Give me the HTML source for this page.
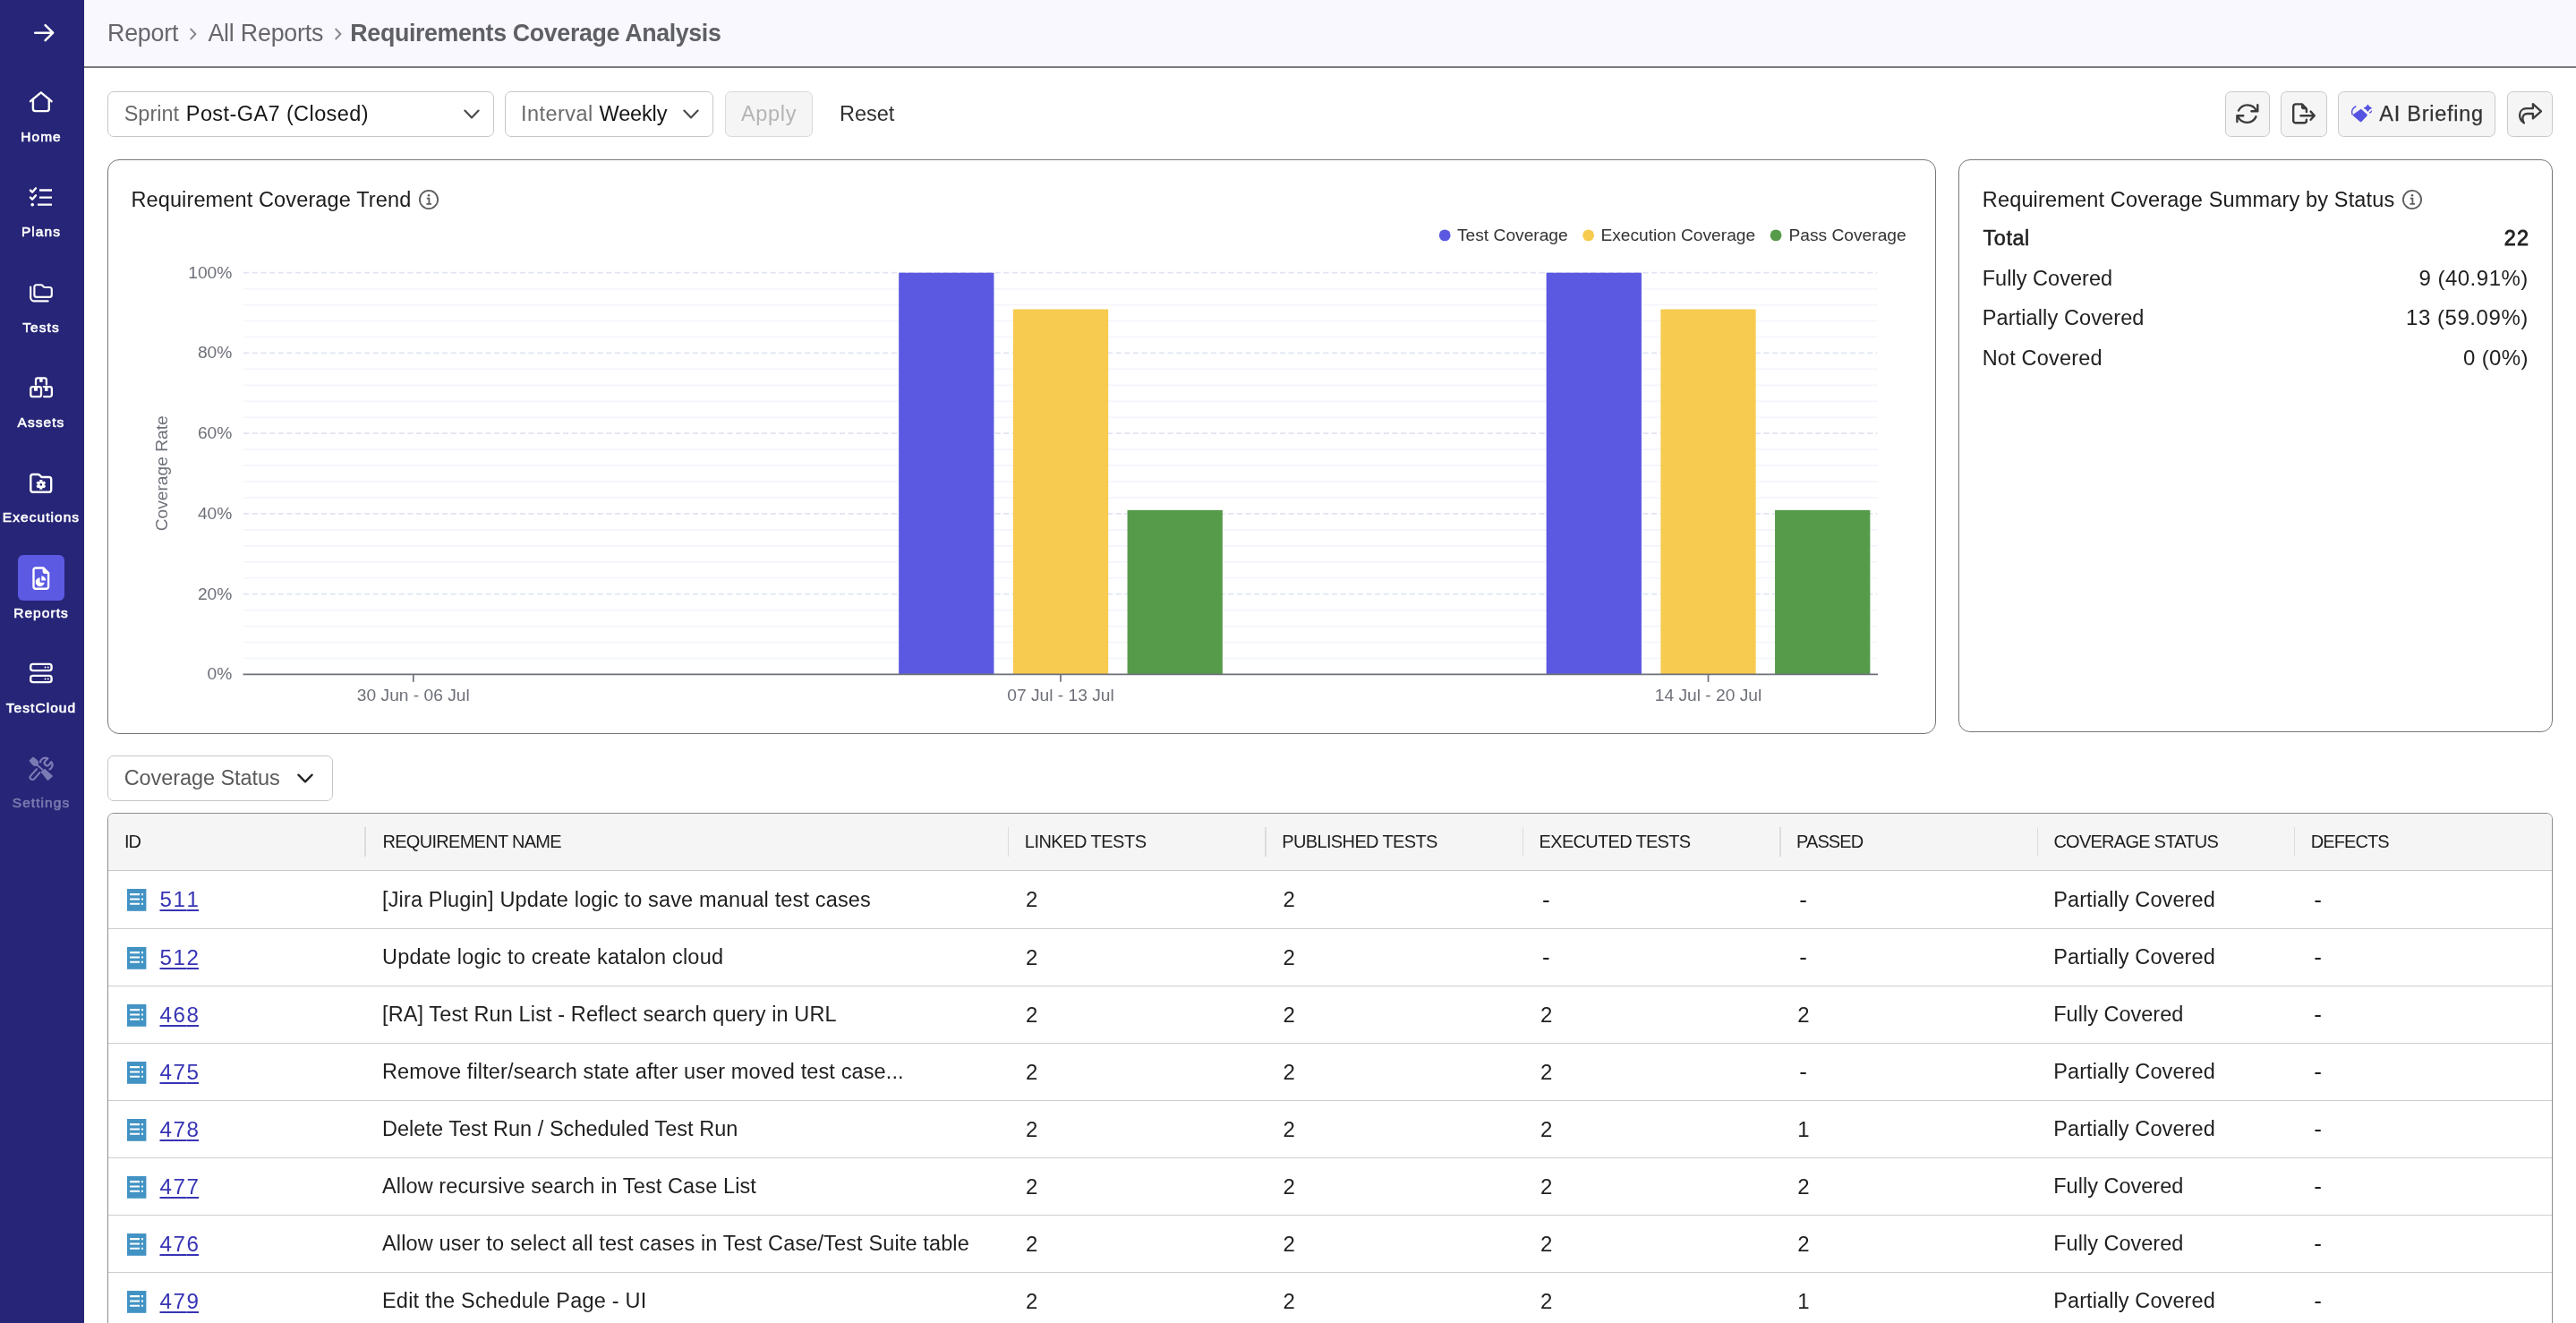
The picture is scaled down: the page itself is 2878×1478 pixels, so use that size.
<!DOCTYPE html>
<html lang="en">
<head>
<meta charset="utf-8">
<title>Requirements Coverage Analysis</title>
<style>
*{box-sizing:border-box;margin:0;padding:0}
html,body{width:2878px;height:1478px;overflow:hidden;background:#fff}
body{font-family:"Liberation Sans",sans-serif;color:#1f1f1f;position:relative;font-size:22.4px}
svg{display:block}
.sidebar,.header,.toolbar,#main{will-change:transform}
/* ---------- sidebar ---------- */
.sidebar{position:absolute;left:0;top:0;width:94px;height:1478px;background:#262577;color:#fff}
.sidebar .toggle{position:absolute;left:0;top:0;width:94px;height:75px}
.nav-item{position:absolute;left:0;width:94px;text-align:center;font-weight:400;font-size:15.5px;letter-spacing:1.05px;color:#fff;-webkit-text-stroke:.6px currentColor}
.nav-item .ico{position:absolute;left:20px;top:0;width:52px;height:51px;border-radius:6px}
.nav-item.active .ico{background:#5c59e3}
.nav-item .lbl{position:absolute;left:-11px;width:114px;text-align:center;top:55.2px;line-height:20px;white-space:nowrap}
.nav-item.disabled{color:#7b7ab0}
/* ---------- header ---------- */
.header{position:absolute;left:94px;top:0;width:2784px;height:76px;background:#f8f8fe;border-bottom:2px solid #7b7b7e}
.crumbs{position:absolute;left:26px;top:0;height:74px;display:flex;align-items:center;font-size:25.6px;color:#66676b;white-space:nowrap}
/* ---------- toolbar ---------- */
.toolbar{position:absolute;left:94px;top:76px;width:2784px;height:102px}
.select{position:absolute;height:51px;top:26px;border:1px solid #c6c6c6;border-radius:7px;background:#fff;white-space:nowrap;line-height:49px;font-size:22.4px;color:#6b6b6b}
.select b{font-weight:400;color:#161616}
.btn{position:absolute;height:51px;top:26px;border:1px solid #c9c9c9;border-radius:6.5px;background:#f5f5f5;white-space:nowrap;line-height:49px;font-size:22.4px;color:#333}

.crumbs span{font-size:26.8px;letter-spacing:-.21px}
.crumbs .c1{letter-spacing:-.2px;margin-right:.2px}
.crumbs .c3{font-weight:700;color:#5f6064;letter-spacing:-.36px;margin-left:-2.8px}
.crumbs .sep{margin:2px 12.6px 0 12.4px}
.select span,.select b,.btn span{position:absolute;top:0;font-size:23.5px}
.select .k{letter-spacing:-.02px}
.btn.dis{color:#b4b4b4;border-color:#d9d9d9}
.reset{position:absolute;left:844px;top:26px;line-height:51px;font-size:23.5px;letter-spacing:-.01px;color:#303030}
/* ---------- cards ---------- */
.card{position:absolute;border:1px solid #77777a;border-radius:13px;background:#fff}
.card h2{position:absolute;font-weight:400;font-size:22.4px;color:#1c1c1c;white-space:nowrap;line-height:28px}

.card h2{font-size:23.5px;line-height:68px;margin-top:3.4px}
.card .info{position:absolute}
.card .chart{position:absolute;left:-1px;top:-1px}
.summary{position:absolute;left:26.5px;top:65px;width:610px;font-size:23.5px}
.summary div{position:relative;height:44.7px;line-height:44.7px}
.summary dt{position:absolute;left:0;top:0;white-space:nowrap}
.summary dd{font-size:24px;position:absolute;right:0;top:0;white-space:nowrap;margin-right:.7px}
.summary div:not(.tot) dt{margin-left:-.8px}
.summary .tot{font-weight:400;-webkit-text-stroke:.55px currentColor}

/* ---------- table ---------- */
.select.cov{position:absolute}
.tablewrap{position:absolute;left:120px;top:908px;width:2732px;height:600px;border:1px solid #8d8d90;border-radius:7px 7px 0 0;overflow:hidden;background:#fff}
table{border-collapse:separate;border-spacing:0;table-layout:fixed;width:2730px;font-size:23.5px}
th{height:64px;background:#f5f5f5;border-bottom:1px solid #c9c9c9;text-align:left;font-weight:400;font-size:20px;color:#1d1d1d;padding:0 0 0 18.3px;position:relative;white-space:nowrap}
th+th:before{content:"";position:absolute;left:-.6px;top:15px;height:33px;width:1.5px;background:#dcdcdc}
th span{position:relative;top:-.5px}
tbody tr:first-child td{height:65px}
td{height:64px;border-bottom:1px solid #cdcdcd;padding:0 0 0 20.5px;white-space:nowrap;color:#1f1f1f;position:relative;letter-spacing:.3px}
th.c0{width:287px;padding-left:18px}th.c1{width:718.5px;padding-left:19.5px}
td.c0{padding-left:0}
td .doc{position:absolute;left:21px;top:20px}
td.n{font-size:24px;padding-left:19.6px}
td.d{font-size:26px;padding-left:21.6px}
td .id i{font-style:normal;letter-spacing:0}
td .id{position:absolute;left:56.5px;top:0;line-height:63px;font-size:24.2px;color:#3734b4;text-decoration:underline;text-decoration-thickness:2px;text-underline-offset:2.6px;letter-spacing:1.6px;padding-left:1px}
td.c1{padding-left:19px}
td .pc{letter-spacing:.1px;margin-left:-2.4px}td .fc{letter-spacing:.01px;margin-left:-2.4px}
</style>
</head>
<body>
<nav class="sidebar" id="sidebar">
<a class="toggle"><svg width="94" height="75" viewBox="0 0 94 75" fill="none" stroke="#fff" stroke-width="2.5" stroke-linecap="round" stroke-linejoin="round"><path d="M39.2 36.7H59M50.6 28.2l8.6 8.5-8.6 8.5"/></svg></a>
<a class="nav-item" style="top:88.0px"><span class="ico"><svg width="51" height="51" viewBox="0 0 51 51" fill="none" stroke="#fff" stroke-width="2.4" stroke-linecap="round" stroke-linejoin="round"><path d="M14 25.2 25.8 15.3 37.6 25.2"/><path d="M16.9 22.8V33.5a2.6 2.6 0 0 0 2.6 2.6H32.2a2.6 2.6 0 0 0 2.6-2.6V22.8"/></svg></span><span class="lbl">Home</span></a>
<a class="nav-item" style="top:194.3px"><span class="ico"><svg width="51" height="51" viewBox="0 0 51 51" fill="none" stroke="#fff" stroke-width="2.4" stroke-linecap="round" stroke-linejoin="round"><path d="M24 18.5H38M24 26.6H38M22 34.6H38" stroke-linecap="butt"/><path d="M14 18.6l2.1 2.1 3.9-4.4M14 26.6l2.1 2.1 3.9-4.4"/><circle cx="16.2" cy="34.7" r="1.4" fill="#fff" stroke-width="1"/></svg></span><span class="lbl">Plans</span></a>
<a class="nav-item" style="top:300.6px"><span class="ico"><svg width="51" height="51" viewBox="0 0 51 51" fill="none" stroke="#fff" stroke-width="2.15" stroke-linecap="round" stroke-linejoin="round"><path d="M20.9 17.2h4.7c.8 0 1.5.3 2 .9l1.2 1.3c.3.4.8.6 1.3.6h5.2c1.4 0 2.5 1.1 2.5 2.5v5.9c0 1.4-1.1 2.5-2.5 2.5H20.9c-1.4 0-2.5-1.1-2.5-2.5V19.7c0-1.4 1.1-2.5 2.5-2.5z"/><path d="M14.2 19.6V31.2c0 2.3 1.9 4.2 4.2 4.2H33.6"/></svg></span><span class="lbl">Tests</span></a>
<a class="nav-item" style="top:406.9px"><span class="ico"><svg width="51" height="51" viewBox="0 0 51 51" fill="none" stroke="#fff" stroke-width="2.3" stroke-linecap="round" stroke-linejoin="round"><path d="M20 22.6V17.4a2.1 2.1 0 0 1 2.1-2.1h7.7a2.1 2.1 0 0 1 2.1 2.1V22.6"/><rect x="14.3" y="25.1" width="11.7" height="11.1" rx="2.3"/><path d="M28.8 25.1h6.8a2.3 2.3 0 0 1 2.3 2.3v6.5a2.3 2.3 0 0 1-2.3 2.3H29.2"/><g fill="#fff" stroke="none"><rect x="24.2" y="15.5" width="3.4" height="4.5" rx=".4"/><rect x="18" y="25.3" width="4" height="4.5" rx=".4"/><rect x="30" y="25.3" width="3.5" height="4.8" rx=".4"/></g></svg></span><span class="lbl">Assets</span></a>
<a class="nav-item" style="top:513.2px"><span class="ico"><svg width="51" height="51" viewBox="0 0 51 51" fill="none" stroke="#fff" stroke-width="2.4" stroke-linecap="round" stroke-linejoin="round"><path d="M16.8 17h5.6c.7 0 1.4.3 1.9.8l1.5 1.6c.4.4.9.6 1.4.6h7.5c1.4 0 2.5 1.1 2.5 2.5v11.8c0 1.4-1.1 2.5-2.5 2.5H16.8c-1.4 0-2.5-1.1-2.5-2.5V19.5c0-1.4 1.1-2.5 2.5-2.5z"/><g stroke="none" fill="#fff"><circle cx="25.8" cy="28.4" r="3.9"/><g stroke="#fff" stroke-width="3.1" stroke-linecap="butt"><path d="M25.8 23.1v10.6M21.2 25.75l9.2 5.3M21.2 31.05l9.2-5.3"/></g></g><circle cx="25.8" cy="28.4" r="1.3" fill="#262577" stroke="none"/></svg></span><span class="lbl">Executions</span></a>
<a class="nav-item active" style="top:619.5px"><span class="ico"><svg width="51" height="51" viewBox="0 0 51 51" fill="none" stroke="#fff" stroke-width="2.4" stroke-linecap="round" stroke-linejoin="round"><path d="M20 14.5h8.6l5.5 5.6V35.2c0 1.4-1.1 2.5-2.5 2.5H20c-1.4 0-2.5-1.1-2.5-2.5V17c0-1.4 1.1-2.5 2.5-2.5z"/><path d="M28.3 15v3.6c0 .9.7 1.6 1.6 1.6h3.7z" fill="#fff" stroke-width="1.4"/><g stroke="none" fill="#fff"><path d="M24.6 25.2a5 5 0 1 0 5.1 5.6h-5.1z"/><path d="M26.3 23.6v5h5A5 5 0 0 0 26.3 23.6z"/></g></svg></span><span class="lbl">Reports</span></a>
<a class="nav-item" style="top:725.8px"><span class="ico"><svg width="51" height="51" viewBox="0 0 51 51" fill="none" stroke="#fff" stroke-width="2.4" stroke-linecap="round" stroke-linejoin="round"><rect x="14.2" y="15.9" width="23.4" height="7.2" rx="2.6"/><rect x="14.2" y="28.9" width="23.4" height="7.2" rx="2.6"/><g stroke="none" fill="#fff"><circle cx="30.6" cy="19.5" r="1"/><circle cx="33.8" cy="19.5" r="1"/><circle cx="30.6" cy="32.5" r="1"/><circle cx="33.8" cy="32.5" r="1"/></g></svg></span><span class="lbl">TestCloud</span></a>
<a class="nav-item disabled" style="top:832.1px"><span class="ico"><svg width="51" height="51" viewBox="0 0 51 51" fill="#7c7ab4" stroke="#7c7ab4" stroke-linejoin="round" stroke-linecap="round"><path stroke-width="1" d="M13.5 17.3 16.2 14.4c.4-.4 1-.4 1.4-.1l4 3.3c.6.5.9 1.2 1 2l.1 1.7-2.1 2.1-1.8 0c-.8 0-1.5-.3-2.1-.9l-3.2-3.8c-.4-.4-.4-1 0-1.4z"/><path fill="none" stroke-width="2" d="M21.3 22.4 27.2 27.6"/><path stroke-width="1.4" d="M26.3 30.3 29.8 27.6 38.3 35 33.5 39.2z"/><path fill="none" stroke-width="2.1" d="M21 27.2 14.3 34.6a2.6 2.6 0 0 0 3.9 3.6L24.5 31"/><path fill="none" stroke-width="2.3" stroke-linecap="butt" d="M24.8 20.3C25 17 27.6 14.7 30.8 14.6c.9 0 1.8.2 2.6.6L30.5 18.3c-1.1 1.2-1 3 .1 4.1 1.2 1.2 3.1 1.2 4.3.1L37.2 19.2c1.2 1.3 1.6 3.2 1.1 4.9-.5 1.8-1.9 3.2-3.6 3.8"/></svg></span><span class="lbl">Settings</span></a>
</nav>
<header class="header" id="header">
<div class="crumbs"><span class="c1">Report</span><svg class="sep" width="8" height="14" viewBox="0 0 8 14" fill="none" stroke="#85868b" stroke-width="2" stroke-linecap="round" stroke-linejoin="round"><path d="M1.3 1.6 6.4 7 1.3 12.4"/></svg><span class="c2">All Reports</span><svg class="sep" width="8" height="14" viewBox="0 0 8 14" fill="none" stroke="#85868b" stroke-width="2" stroke-linecap="round" stroke-linejoin="round"><path d="M1.3 1.6 6.4 7 1.3 12.4"/></svg><span class="c3">Requirements Coverage Analysis</span></div>
</header>
<section class="toolbar" id="toolbar">
<div class="select" style="left:26px;width:432px"><span class="k" style="left:17.7px">Sprint</span><b style="left:86.8px;letter-spacing:.41px">Post-GA7 (Closed)</b><svg style="position:absolute;left:397px;top:19px" width="18" height="12" viewBox="0 0 18 12" fill="none" stroke="#4a4a4a" stroke-width="2.2" stroke-linecap="round" stroke-linejoin="round"><path d="M1.4 1.6 9 9.4 16.6 1.6"/></svg></div>
<div class="select" style="left:470px;width:233px"><span class="k" style="left:17px;letter-spacing:.45px">Interval</span><b style="left:104.6px;letter-spacing:-.16px">Weekly</b><svg style="position:absolute;left:198px;top:19px" width="18" height="12" viewBox="0 0 18 12" fill="none" stroke="#4a4a4a" stroke-width="2.2" stroke-linecap="round" stroke-linejoin="round"><path d="M1.4 1.6 9 9.4 16.6 1.6"/></svg></div>
<div class="btn dis" style="left:716px;width:98px"><span style="left:17px;letter-spacing:.66px">Apply</span></div>
<div class="reset">Reset</div>
<div class="btn" style="left:2392px;width:50px"><svg width="48" height="49" viewBox="0 0 48 49" fill="none" stroke="#3b3b3b" stroke-width="2.4" stroke-linecap="round" stroke-linejoin="round"><path d="M14 20.6A11 11 0 0 1 33.9 20.8"/><path d="M35.3 14.3v7h-6.9"/><path d="M33.5 27.3A11 11 0 0 1 13.6 27.8"/><path d="M12.4 33v-6.7h6.9"/></svg></div>
<div class="btn" style="left:2454px;width:52px"><svg width="50" height="49" viewBox="0 0 50 49" fill="none" stroke="#3b3b3b" stroke-width="2.4" stroke-linecap="round" stroke-linejoin="round"><path d="M27.9 22V18.6L22.9 13.4H15.8a2.6 2.6 0 0 0-2.6 2.6V31.7a2.6 2.6 0 0 0 2.6 2.6h9.5a2.6 2.6 0 0 0 2.6-2.6V30.8"/><path d="M22.6 13.6v3.3a1.7 1.7 0 0 0 1.7 1.7h3.4z" fill="#3b3b3b" stroke-width="1.2"/><path d="M21.4 26.2H36M32.6 21.6l4.2 4.6-4.2 4.6"/></svg></div>
<div class="btn" style="left:2518px;width:176px"><svg style="position:absolute;left:14px;top:13px" width="25" height="22" viewBox="0 0 25 22" fill="#5552e0" stroke="none"><path d="M10 6.3c.45-.45 1.1-.45 1.5 0l6 5.5c.45.45.45 1.1 0 1.6l-6.2 6.6c-.45.45-1.1.45-1.5 0l-7.6-6.6c-.45-.45-.45-1.1 0-1.6z"/><path d="M4.8 3C1.3 4.6-.3 8.4 1.2 12" fill="none" stroke="#5552e0" stroke-width="1.5" stroke-linecap="round"/><path d="M18.4.5Q19.8 3.4 23.3 4.8 19.8 6.2 18.4 9.1 17 6.2 13.5 4.8 17 3.4 18.4.5z"/><path d="M22.7 6.8c.7 1.6-.1 3.2-1.7 3.9l-1.2-1.3c1.4-.3 2.4-1.2 2.9-2.6z"/></svg><span style="left:45.3px;letter-spacing:.74px;-webkit-text-stroke:.25px currentColor">AI Briefing</span></div>
<div class="btn" style="left:2707px;width:51px"><svg width="49" height="49" viewBox="0 0 49 49" fill="none" stroke="#3b3b3b" stroke-width="2.3" stroke-linecap="round" stroke-linejoin="round"><path d="M27.9 13.2 37 21.3 27.9 29.4V24H21.6c-3.2 0-5.4 2.3-5.2 5.6.1 1.7.6 3.3 1.5 4.8C14.7 32.3 13 29 13.1 25.5 13.2 21.2 16.3 18.2 20.6 18.2h7.3z"/></svg></div>
</section>
<main id="main">
<section class="card" style="left:120px;top:178px;width:2043px;height:642px">
<h2 style="left:25.4px;top:6.5px;letter-spacing:.13px">Requirement Coverage Trend</h2><svg class="info" style="left:346px;top:31.6px" width="24" height="24" viewBox="0 0 24 24" fill="none" stroke="#5c5c5c" stroke-width="1.8"><circle cx="12" cy="12" r="10.1"/><path d="M9.8 10.6h2.6v6.2M9.4 16.9h5.6" stroke-width="1.8"/><circle cx="12" cy="7.3" r="1.3" fill="#5c5c5c" stroke="none"/></svg>
<svg class="chart" width="2042" height="640" viewBox="0 0 2042 640">
<line x1="152" x2="1977.5" y1="144.65" y2="144.65" stroke="#f3f5fc" stroke-width="1.6"/>
<line x1="152" x2="1977.5" y1="162.60" y2="162.60" stroke="#f3f5fc" stroke-width="1.6"/>
<line x1="152" x2="1977.5" y1="180.55" y2="180.55" stroke="#f3f5fc" stroke-width="1.6"/>
<line x1="152" x2="1977.5" y1="198.50" y2="198.50" stroke="#f3f5fc" stroke-width="1.6"/>
<line x1="152" x2="1977.5" y1="234.40" y2="234.40" stroke="#f3f5fc" stroke-width="1.6"/>
<line x1="152" x2="1977.5" y1="252.35" y2="252.35" stroke="#f3f5fc" stroke-width="1.6"/>
<line x1="152" x2="1977.5" y1="270.30" y2="270.30" stroke="#f3f5fc" stroke-width="1.6"/>
<line x1="152" x2="1977.5" y1="288.25" y2="288.25" stroke="#f3f5fc" stroke-width="1.6"/>
<line x1="152" x2="1977.5" y1="324.15" y2="324.15" stroke="#f3f5fc" stroke-width="1.6"/>
<line x1="152" x2="1977.5" y1="342.10" y2="342.10" stroke="#f3f5fc" stroke-width="1.6"/>
<line x1="152" x2="1977.5" y1="360.05" y2="360.05" stroke="#f3f5fc" stroke-width="1.6"/>
<line x1="152" x2="1977.5" y1="378.00" y2="378.00" stroke="#f3f5fc" stroke-width="1.6"/>
<line x1="152" x2="1977.5" y1="413.90" y2="413.90" stroke="#f3f5fc" stroke-width="1.6"/>
<line x1="152" x2="1977.5" y1="431.85" y2="431.85" stroke="#f3f5fc" stroke-width="1.6"/>
<line x1="152" x2="1977.5" y1="449.80" y2="449.80" stroke="#f3f5fc" stroke-width="1.6"/>
<line x1="152" x2="1977.5" y1="467.75" y2="467.75" stroke="#f3f5fc" stroke-width="1.6"/>
<line x1="152" x2="1977.5" y1="503.65" y2="503.65" stroke="#f3f5fc" stroke-width="1.6"/>
<line x1="152" x2="1977.5" y1="521.60" y2="521.60" stroke="#f3f5fc" stroke-width="1.6"/>
<line x1="152" x2="1977.5" y1="539.55" y2="539.55" stroke="#f3f5fc" stroke-width="1.6"/>
<line x1="152" x2="1977.5" y1="557.50" y2="557.50" stroke="#f3f5fc" stroke-width="1.6"/>
<line x1="152" x2="1977.5" y1="126.70" y2="126.70" stroke="#e0e5f1" stroke-width="1.8" stroke-dasharray="6.2 3.45"/>
<line x1="152" x2="1977.5" y1="216.45" y2="216.45" stroke="#e0e5f1" stroke-width="1.8" stroke-dasharray="6.2 3.45"/>
<line x1="152" x2="1977.5" y1="306.20" y2="306.20" stroke="#e0e5f1" stroke-width="1.8" stroke-dasharray="6.2 3.45"/>
<line x1="152" x2="1977.5" y1="395.95" y2="395.95" stroke="#e0e5f1" stroke-width="1.8" stroke-dasharray="6.2 3.45"/>
<line x1="152" x2="1977.5" y1="485.70" y2="485.70" stroke="#e0e5f1" stroke-width="1.8" stroke-dasharray="6.2 3.45"/>
<rect x="884.15" y="126.70" width="106.3" height="448.75" fill="#5b59e2"/>
<rect x="1011.85" y="167.49" width="106.3" height="407.96" fill="#f7cb4f"/>
<rect x="1139.55" y="391.87" width="106.3" height="183.58" fill="#569b4a"/>
<rect x="1607.65" y="126.70" width="106.3" height="448.75" fill="#5b59e2"/>
<rect x="1735.35" y="167.49" width="106.3" height="407.96" fill="#f7cb4f"/>
<rect x="1863.05" y="391.87" width="106.3" height="183.58" fill="#569b4a"/>
<line x1="151.5" x2="1978.0" y1="575.45" y2="575.45" stroke="#6e7079" stroke-width="1.7"/>
<line x1="341.8" x2="341.8" y1="575.45" y2="583.85" stroke="#6e7079" stroke-width="1.7"/>
<line x1="1065" x2="1065" y1="575.45" y2="583.85" stroke="#6e7079" stroke-width="1.7"/>
<line x1="1788.5" x2="1788.5" y1="575.45" y2="583.85" stroke="#6e7079" stroke-width="1.7"/>
<g font-family="Liberation Sans, sans-serif" font-size="19.2" fill="#6e7079">
<text x="139.3" y="132.70" text-anchor="end">100%</text>
<text x="139.3" y="222.45" text-anchor="end">80%</text>
<text x="139.3" y="312.20" text-anchor="end">60%</text>
<text x="139.3" y="401.95" text-anchor="end">40%</text>
<text x="139.3" y="491.70" text-anchor="end">20%</text>
<text x="139.3" y="581.45" text-anchor="end">0%</text>
<text x="341.8" y="605.1" text-anchor="middle">30 Jun - 06 Jul</text>
<text x="1065" y="605.1" text-anchor="middle">07 Jul - 13 Jul</text>
<text x="1788.5" y="605.1" text-anchor="middle">14 Jul - 20 Jul</text>
<text transform="translate(67.1 350.8) rotate(-90)" text-anchor="middle">Coverage Rate</text>
</g>
<g font-family="Liberation Sans, sans-serif" font-size="19.2" fill="#333">
<circle cx="1494.2" cy="84.9" r="6.4" fill="#5b59e2"/><text x="1508.0" y="90.7">Test Coverage</text>
<circle cx="1654.6" cy="84.9" r="6.4" fill="#f7cb4f"/><text x="1668.4" y="90.7">Execution Coverage</text>
<circle cx="1864.1" cy="84.9" r="6.4" fill="#569b4a"/><text x="1878.5" y="90.7">Pass Coverage</text>
</g>
</svg>
</section>
<section class="card" style="left:2188px;top:178px;width:664px;height:640px">
<h2 style="left:25.8px;top:6.5px;letter-spacing:.16px">Requirement Coverage Summary by Status</h2><svg class="info" style="left:493.5px;top:31.6px" width="24" height="24" viewBox="0 0 24 24" fill="none" stroke="#5c5c5c" stroke-width="1.8"><circle cx="12" cy="12" r="10.1"/><path d="M9.8 10.6h2.6v6.2M9.4 16.9h5.6" stroke-width="1.8"/><circle cx="12" cy="7.3" r="1.3" fill="#5c5c5c" stroke="none"/></svg>
<dl class="summary">
<div class="tot"><dt style="letter-spacing:.55px">Total</dt><dd style="letter-spacing:1.3px;margin-right:-.8px;font-size:23.4px;-webkit-text-stroke:.85px currentColor">22</dd></div>
<div><dt style="letter-spacing:.04px">Fully Covered</dt><dd style="letter-spacing:.5px">9 (40.91%)</dd></div>
<div><dt style="letter-spacing:.11px">Partially Covered</dt><dd style="letter-spacing:.55px">13 (59.09%)</dd></div>
<div><dt style="letter-spacing:.2px">Not Covered</dt><dd style="letter-spacing:.35px">0 (0%)</dd></div>
</dl>
</section>
<div class="select cov" style="left:120px;top:844px;width:252px;height:51px"><span class="k" style="left:17.7px;letter-spacing:-.07px;color:#5a5a5a">Coverage Status</span><svg style="position:absolute;left:210.5px;top:19px" width="18" height="12" viewBox="0 0 18 12" fill="none" stroke="#222" stroke-width="2.3" stroke-linecap="round" stroke-linejoin="round"><path d="M1.4 1.6 9 9.4 16.6 1.6"/></svg></div>
<div class="tablewrap">
<table>
<thead><tr><th class="c0"><span style="letter-spacing:-1.0px">ID</span></th><th class="c1"><span style="letter-spacing:-0.71px">REQUIREMENT NAME</span></th><th class="c2"><span style="letter-spacing:-0.52px">LINKED TESTS</span></th><th class="c3"><span style="letter-spacing:-0.63px">PUBLISHED TESTS</span></th><th class="c4"><span style="letter-spacing:-0.7px">EXECUTED TESTS</span></th><th class="c5"><span style="letter-spacing:-0.9px">PASSED</span></th><th class="c6"><span style="letter-spacing:-0.75px">COVERAGE STATUS</span></th><th class="c7"><span style="letter-spacing:-0.94px">DEFECTS</span></th></tr></thead>
<tbody>
<tr><td class="c0"><svg class="doc" width="22" height="25" viewBox="0 0 22 25"><rect width="21.4" height="24.8" fill="#4293c4"/><path d="M3.1 6.1h11M3.1 11.5h11M3.1 16.8h11M16 6.1h2M16 11.5h2M16 16.8h2" stroke="#fff" stroke-width="2.1"/></svg><a class="id">51<i>1</i></a></td><td class="c1"><span style="letter-spacing:0.15px">[Jira Plugin] Update logic to save manual test cases</span></td><td class="n">2</td><td class="n">2</td><td class="n d">-</td><td class="n d">-</td><td><span class="pc">Partially Covered</span></td><td class="n d">-</td></tr>
<tr><td class="c0"><svg class="doc" width="22" height="25" viewBox="0 0 22 25"><rect width="21.4" height="24.8" fill="#4293c4"/><path d="M3.1 6.1h11M3.1 11.5h11M3.1 16.8h11M16 6.1h2M16 11.5h2M16 16.8h2" stroke="#fff" stroke-width="2.1"/></svg><a class="id">51<i>2</i></a></td><td class="c1"><span style="letter-spacing:0.21px">Update logic to create katalon cloud</span></td><td class="n">2</td><td class="n">2</td><td class="n d">-</td><td class="n d">-</td><td><span class="pc">Partially Covered</span></td><td class="n d">-</td></tr>
<tr><td class="c0"><svg class="doc" width="22" height="25" viewBox="0 0 22 25"><rect width="21.4" height="24.8" fill="#4293c4"/><path d="M3.1 6.1h11M3.1 11.5h11M3.1 16.8h11M16 6.1h2M16 11.5h2M16 16.8h2" stroke="#fff" stroke-width="2.1"/></svg><a class="id">46<i>8</i></a></td><td class="c1"><span style="letter-spacing:0.11px">[RA] Test Run List - Reflect search query in URL</span></td><td class="n">2</td><td class="n">2</td><td class="n">2</td><td class="n">2</td><td><span class="fc">Fully Covered</span></td><td class="n d">-</td></tr>
<tr><td class="c0"><svg class="doc" width="22" height="25" viewBox="0 0 22 25"><rect width="21.4" height="24.8" fill="#4293c4"/><path d="M3.1 6.1h11M3.1 11.5h11M3.1 16.8h11M16 6.1h2M16 11.5h2M16 16.8h2" stroke="#fff" stroke-width="2.1"/></svg><a class="id">47<i>5</i></a></td><td class="c1"><span style="letter-spacing:0.12px">Remove filter/search state after user moved test case...</span></td><td class="n">2</td><td class="n">2</td><td class="n">2</td><td class="n d">-</td><td><span class="pc">Partially Covered</span></td><td class="n d">-</td></tr>
<tr><td class="c0"><svg class="doc" width="22" height="25" viewBox="0 0 22 25"><rect width="21.4" height="24.8" fill="#4293c4"/><path d="M3.1 6.1h11M3.1 11.5h11M3.1 16.8h11M16 6.1h2M16 11.5h2M16 16.8h2" stroke="#fff" stroke-width="2.1"/></svg><a class="id">47<i>8</i></a></td><td class="c1"><span style="letter-spacing:0.03px">Delete Test Run / Scheduled Test Run</span></td><td class="n">2</td><td class="n">2</td><td class="n">2</td><td class="n">1</td><td><span class="pc">Partially Covered</span></td><td class="n d">-</td></tr>
<tr><td class="c0"><svg class="doc" width="22" height="25" viewBox="0 0 22 25"><rect width="21.4" height="24.8" fill="#4293c4"/><path d="M3.1 6.1h11M3.1 11.5h11M3.1 16.8h11M16 6.1h2M16 11.5h2M16 16.8h2" stroke="#fff" stroke-width="2.1"/></svg><a class="id">47<i>7</i></a></td><td class="c1"><span style="letter-spacing:0.11px">Allow recursive search in Test Case List</span></td><td class="n">2</td><td class="n">2</td><td class="n">2</td><td class="n">2</td><td><span class="fc">Fully Covered</span></td><td class="n d">-</td></tr>
<tr><td class="c0"><svg class="doc" width="22" height="25" viewBox="0 0 22 25"><rect width="21.4" height="24.8" fill="#4293c4"/><path d="M3.1 6.1h11M3.1 11.5h11M3.1 16.8h11M16 6.1h2M16 11.5h2M16 16.8h2" stroke="#fff" stroke-width="2.1"/></svg><a class="id">47<i>6</i></a></td><td class="c1"><span style="letter-spacing:0.13px">Allow user to select all test cases in Test Case/Test Suite table</span></td><td class="n">2</td><td class="n">2</td><td class="n">2</td><td class="n">2</td><td><span class="fc">Fully Covered</span></td><td class="n d">-</td></tr>
<tr><td class="c0"><svg class="doc" width="22" height="25" viewBox="0 0 22 25"><rect width="21.4" height="24.8" fill="#4293c4"/><path d="M3.1 6.1h11M3.1 11.5h11M3.1 16.8h11M16 6.1h2M16 11.5h2M16 16.8h2" stroke="#fff" stroke-width="2.1"/></svg><a class="id">47<i>9</i></a></td><td class="c1"><span style="letter-spacing:0.2px">Edit the Schedule Page - UI</span></td><td class="n">2</td><td class="n">2</td><td class="n">2</td><td class="n">1</td><td><span class="pc">Partially Covered</span></td><td class="n d">-</td></tr>
<tr><td class="c0"><svg class="doc" width="22" height="25" viewBox="0 0 22 25"><rect width="21.4" height="24.8" fill="#4293c4"/><path d="M3.1 6.1h11M3.1 11.5h11M3.1 16.8h11M16 6.1h2M16 11.5h2M16 16.8h2" stroke="#fff" stroke-width="2.1"/></svg><a class="id">48<i>0</i></a></td><td class="c1"><span style="letter-spacing:0.2px">Edit the Schedule Page - Logic</span></td><td class="n">2</td><td class="n">2</td><td class="n">2</td><td class="n">1</td><td><span class="pc">Partially Covered</span></td><td class="n d">-</td></tr>
</tbody>
</table>
</div>
</main>
</body>
</html>
